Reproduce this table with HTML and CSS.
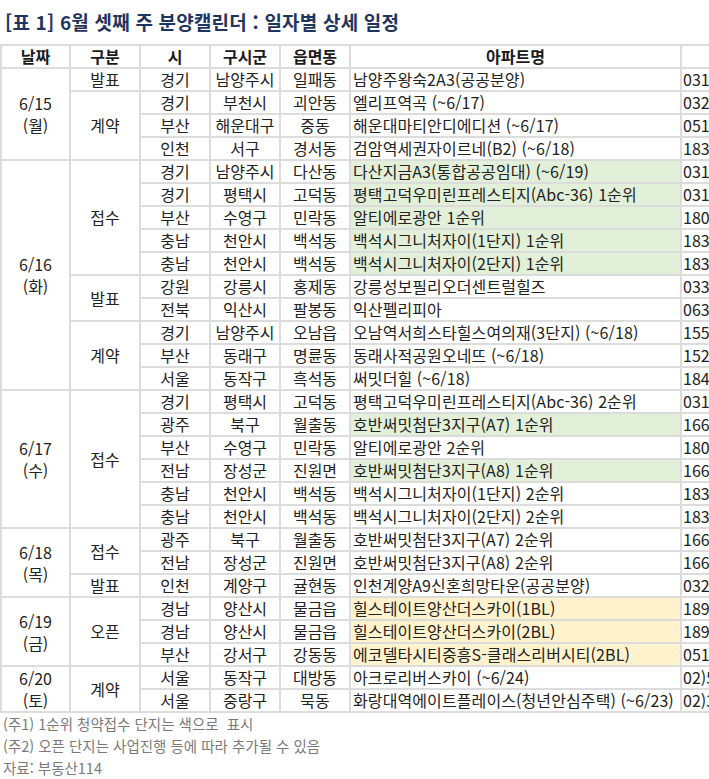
FILE: index.html
```html
<!DOCTYPE html>
<html lang="ko">
<head>
<meta charset="utf-8">
<title>6월 셋째 주 분양캘린더</title>
<link rel="stylesheet" href="styles.css">
</head>
<body>
<div class="page">
  <div class="title-bar"><h1 class="title">[표 1] 6월 셋째 주 분양캘린더 : 일자별 상세 일정</h1></div>
  <table class="cal">
    <colgroup>
      <col class="c-date"><col class="c-type"><col class="c-si"><col class="c-gu"><col class="c-dong"><col class="c-name"><col class="c-tel">
    </colgroup>
    <thead>
      <tr><th>날짜</th><th>구분</th><th>시</th><th>구시군</th><th>읍면동</th><th>아파트명</th><th>문의처</th></tr>
    </thead>
    <tbody>
      <tr><td class="date" rowspan="4">6/15<br>(월)</td><td>발표</td><td>경기</td><td>남양주시</td><td>일패동</td><td class="name">남양주왕숙2A3(공공분양)</td><td class="tel">031)</td></tr>
      <tr><td rowspan="3">계약</td><td>경기</td><td>부천시</td><td>괴안동</td><td class="name">엘리프역곡 (~6/17)</td><td class="tel">032)</td></tr>
      <tr><td>부산</td><td>해운대구</td><td>중동</td><td class="name">해운대마티안디에디션 (~6/17)</td><td class="tel">051)</td></tr>
      <tr><td>인천</td><td>서구</td><td>경서동</td><td class="name">검암역세권자이르네(B2) (~6/18)</td><td class="tel">1833</td></tr>

      <tr><td class="date" rowspan="10">6/16<br>(화)</td><td rowspan="5">접수</td><td>경기</td><td>남양주시</td><td>다산동</td><td class="name green">다산지금A3(통합공공임대) (~6/19)</td><td class="tel">031)</td></tr>
      <tr><td>경기</td><td>평택시</td><td>고덕동</td><td class="name green">평택고덕우미린프레스티지(Abc-36) 1순위</td><td class="tel">031)</td></tr>
      <tr><td>부산</td><td>수영구</td><td>민락동</td><td class="name green">알티에로광안 1순위</td><td class="tel">1800</td></tr>
      <tr><td>충남</td><td>천안시</td><td>백석동</td><td class="name green">백석시그니처자이(1단지) 1순위</td><td class="tel">1833</td></tr>
      <tr><td>충남</td><td>천안시</td><td>백석동</td><td class="name green">백석시그니처자이(2단지) 1순위</td><td class="tel">1833</td></tr>
      <tr><td rowspan="2">발표</td><td>강원</td><td>강릉시</td><td>홍제동</td><td class="name">강릉성보필리오더센트럴힐즈</td><td class="tel">033)</td></tr>
      <tr><td>전북</td><td>익산시</td><td>팔봉동</td><td class="name">익산펠리피아</td><td class="tel">063)</td></tr>
      <tr><td rowspan="3">계약</td><td>경기</td><td>남양주시</td><td>오남읍</td><td class="name">오남역서희스타힐스여의재(3단지) (~6/18)</td><td class="tel">1555</td></tr>
      <tr><td>부산</td><td>동래구</td><td>명륜동</td><td class="name">동래사적공원오네뜨 (~6/18)</td><td class="tel">1522</td></tr>
      <tr><td>서울</td><td>동작구</td><td>흑석동</td><td class="name">써밋더힐 (~6/18)</td><td class="tel">1844</td></tr>

      <tr><td class="date" rowspan="6">6/17<br>(수)</td><td rowspan="6">접수</td><td>경기</td><td>평택시</td><td>고덕동</td><td class="name">평택고덕우미린프레스티지(Abc-36) 2순위</td><td class="tel">031)</td></tr>
      <tr><td>광주</td><td>북구</td><td>월출동</td><td class="name green">호반써밋첨단3지구(A7) 1순위</td><td class="tel">1661</td></tr>
      <tr><td>부산</td><td>수영구</td><td>민락동</td><td class="name">알티에로광안 2순위</td><td class="tel">1800</td></tr>
      <tr><td>전남</td><td>장성군</td><td>진원면</td><td class="name green">호반써밋첨단3지구(A8) 1순위</td><td class="tel">1661</td></tr>
      <tr><td>충남</td><td>천안시</td><td>백석동</td><td class="name">백석시그니처자이(1단지) 2순위</td><td class="tel">1833</td></tr>
      <tr><td>충남</td><td>천안시</td><td>백석동</td><td class="name">백석시그니처자이(2단지) 2순위</td><td class="tel">1833</td></tr>

      <tr><td class="date" rowspan="3">6/18<br>(목)</td><td rowspan="2">접수</td><td>광주</td><td>북구</td><td>월출동</td><td class="name">호반써밋첨단3지구(A7) 2순위</td><td class="tel">1661</td></tr>
      <tr><td>전남</td><td>장성군</td><td>진원면</td><td class="name">호반써밋첨단3지구(A8) 2순위</td><td class="tel">1661</td></tr>
      <tr><td>발표</td><td>인천</td><td>계양구</td><td>귤현동</td><td class="name">인천계양A9신혼희망타운(공공분양)</td><td class="tel">032)</td></tr>

      <tr><td class="date" rowspan="3">6/19<br>(금)</td><td rowspan="3">오픈</td><td>경남</td><td>양산시</td><td>물금읍</td><td class="name yellow">힐스테이트양산더스카이(1BL)</td><td class="tel">1899</td></tr>
      <tr><td>경남</td><td>양산시</td><td>물금읍</td><td class="name yellow">힐스테이트양산더스카이(2BL)</td><td class="tel">1899</td></tr>
      <tr><td>부산</td><td>강서구</td><td>강동동</td><td class="name yellow">에코델타시티중흥S-클래스리버시티(2BL)</td><td class="tel">051)</td></tr>

      <tr><td class="date" rowspan="2">6/20<br>(토)</td><td rowspan="2">계약</td><td>서울</td><td>동작구</td><td>대방동</td><td class="name">아크로리버스카이 (~6/24)</td><td class="tel">02)5</td></tr>
      <tr><td>서울</td><td>중랑구</td><td>묵동</td><td class="name">화랑대역에이트플레이스(청년안심주택) (~6/23)</td><td class="tel">02)3</td></tr>
    </tbody>
  </table>
  <div class="notes">
    <p>(주1) 1순위 청약접수 단지는 색으로&nbsp; 표시</p>
    <p>(주2) 오픈 단지는 사업진행 등에 따라 추가될 수 있음</p>
    <p>자료: 부동산114</p>
  </div>
</div>
</body>
</html>
```
FILE: styles.css
```css
html, body {
  margin: 0;
  padding: 0;
  background: #ffffff;
  overflow: hidden;
}

.page {
  width: 709px;
  overflow: hidden;
  font-family: "Noto Sans CJK KR", "Noto Sans", sans-serif;
  color: #222222;
}

.title-bar {
  height: 44px;
  display: flex;
  align-items: center;
  padding-left: 5px;
}

.title {
  margin: 0;
  font-size: 19px;
  font-weight: 700;
  color: #1f3560;
  line-height: 24px;
  letter-spacing: 0.2px;
}

.cal {
  width: 782px;
  table-layout: fixed;
  border-collapse: separate;
  border-spacing: 0;
  border-top: 2px solid #dcdcdc;
  border-left: 2px solid #dcdcdc;
  font-size: 16px;
}

.c-date { width: 69px; }
.c-type { width: 70px; }
.c-si { width: 70px; }
.c-gu { width: 70px; }
.c-dong { width: 70px; }
.c-name { width: 331px; }
.c-tel { width: 100px; }

.cal th,
.cal td {
  box-sizing: border-box;
  height: 23px;
  padding: 0;
  border-right: 2px solid #dcdcdc;
  border-bottom: 2px solid #dcdcdc;
  text-align: center;
  vertical-align: middle;
  line-height: 21px;
  white-space: nowrap;
}

.cal th {
  font-weight: 700;
  color: #1a1a1a;
}

.cal td.date {
  line-height: 22px;
}

.cal td.name {
  text-align: left;
  padding-left: 2px;
  letter-spacing: 0.1px;
}

.cal td.tel {
  text-align: left;
  padding-left: 1px;
}

.cal td.green {
  background: #e2efd9;
}

.cal td.yellow {
  background: #fff2cc;
}

.notes {
  padding-left: 3px;
  color: #7a7a7a;
  font-size: 14.5px;
}

.notes p {
  margin: 0;
  line-height: 22px;
}
```
